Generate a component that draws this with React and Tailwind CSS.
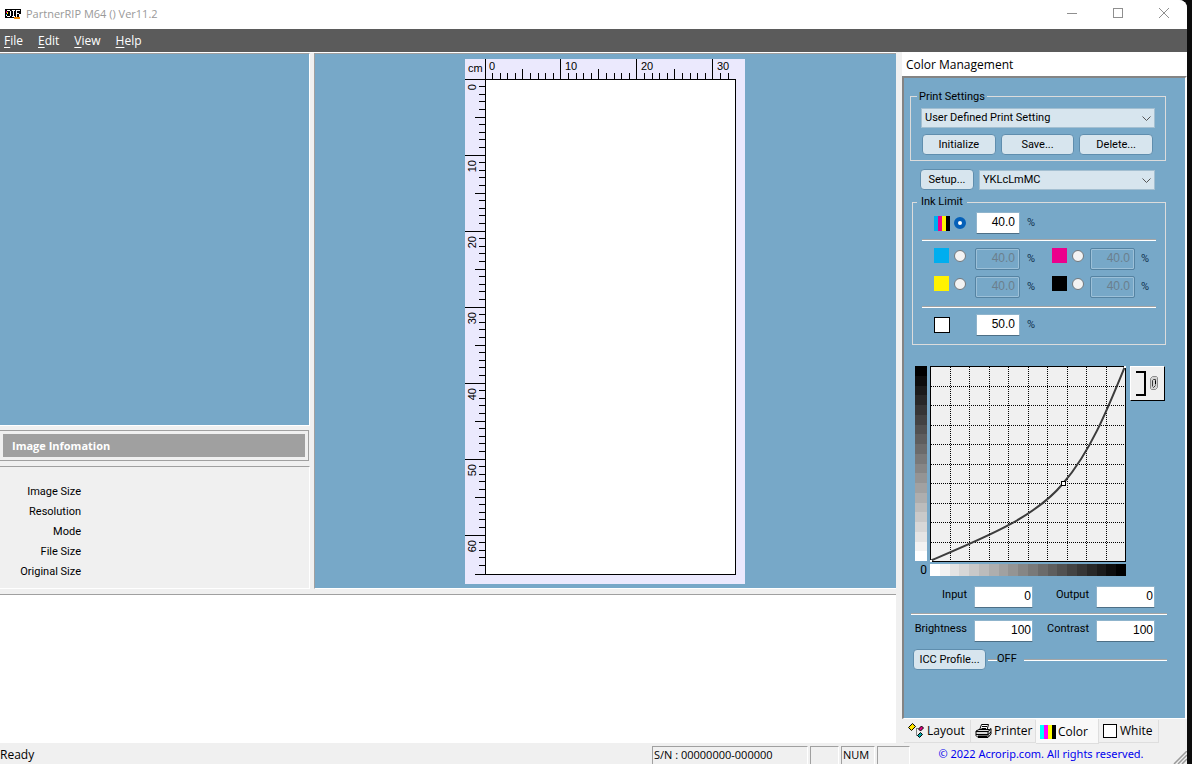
import { useState } from 'react';
import clsx from 'clsx';

const MENUS = ['File', 'Edit', 'View', 'Help'];
const INFO_ROWS = ['Image Size', 'Resolution', 'Mode', 'File Size', 'Original Size'];
const STEPS = Array.from({ length: 20 }, (_, i) => i);

const Logo = () => (
  <svg width="17" height="12" viewBox="0 0 17 12" shapeRendering="crispEdges" aria-hidden="true">
    <path d="M0 0H16V5H14V9H0Z" fill="#000" />
    <rect x="9" y="8" width="6" height="2" fill="#f08a00" />
    <path d="M2 1.5H5M5.5 2V7M2 7.5H5M1.5 6V7" fill="none" stroke="#fff" />
    <rect x="1" y="2" width="1" height="2" fill="#e6007e" />
    <rect x="2" y="3" width="1" height="2" fill="#fff200" />
    <rect x="1" y="5" width="1" height="1" fill="#00aeef" />
    <path d="M7 1.5H10M8.5 2V7M7 7.5H10M11.5 8V1M12 1.5H15M12 4.5H14" fill="none" stroke="#fff" />
  </svg>
);

const TitleBar = () => (
  <header className="h-[29px] shrink-0 flex items-center justify-between bg-white pl-[5px] text-[#999999]">
    <div className="flex items-center gap-1">
      <Logo />
      <h1 className="text-[11px]">PartnerRIP M64 () Ver11.2</h1>
    </div>
    <div className="flex items-center h-full pb-[2px]">
      <button aria-label="Minimize" className="w-[46px] h-full flex items-center justify-center">
        <svg width="11" height="11"><path d="M0 5.5H10" stroke="#8f8f8f" fill="none" /></svg>
      </button>
      <button aria-label="Maximize" className="w-[46px] h-full flex items-center justify-center">
        <svg width="11" height="11"><rect x=".5" y=".5" width="9" height="9" stroke="#8f8f8f" fill="none" /></svg>
      </button>
      <button aria-label="Close" className="w-[46px] h-full flex items-center justify-center">
        <svg width="11" height="11"><path d="M0 0L10 10M10 0L0 10" stroke="#8f8f8f" fill="none" /></svg>
      </button>
    </div>
  </header>
);

const MenuBar = () => (
  <nav className="h-[23px] shrink-0 flex items-center bg-[#5b5b5b] text-white text-[12px] pl-1 gap-[15px]">
    {MENUS.map((m) => (
      <button key={m}>
        <span className="underline underline-offset-2">{m[0]}</span>
        {m.slice(1)}
      </button>
    ))}
  </nav>
);

// Tick start for 1 cm, 5 cm and 10 cm marks
const tickFrom = (k) => (k % 10 === 0 ? 0 : k % 5 === 0 ? 10 : 14);

const Ruler = () => {
  const cols = Array.from({ length: 32 }, (_, i) => i + 1);
  const rows = Array.from({ length: 64 }, (_, i) => i + 1);
  return (
    <svg width="280" height="525" viewBox="0 0 280 525" shapeRendering="crispEdges" className="text-[11px]">
      <rect width="280" height="525" fill="#ebe9fd" />
      <rect x="20.5" y="20.5" width="250" height="495" fill="#fff" stroke="#000" />
      <path d="M20.5 0V20M0 20.5H20M10 515.5H20" stroke="#000" />
      {cols.map((k) => {
        const x = Math.round(19.4 + k * 7.6) + 0.5;
        return <path key={k} d={`M${x} ${tickFrom(k)}V20`} stroke="#000" />;
      })}
      {rows.map((k) => {
        const y = Math.floor(20 + k * 7.6) + 0.5;
        return <path key={k} d={`M${tickFrom(k)} ${y}H20`} stroke="#000" />;
      })}
      <text x="3" y="13">cm</text>
      {[0, 10, 20, 30].map((n) => (
        <text key={n} x={24 + n * 7.6} y="11">{n}</text>
      ))}
      {[0, 10, 20, 30, 40, 50, 60].map((n) => (
        <text key={n} textAnchor="end" transform={`translate(11 ${25 + n * 7.6}) rotate(-90)`}>{n}</text>
      ))}
    </svg>
  );
};

const LeftColumn = () => (
  <aside className="w-[310px] shrink-0 flex flex-col">
    <div className="flex-1 bg-[#77a8c8] border-t border-t-[#a0a0a0] border-r border-b border-white" />
    <div className="mt-1 border-y border-r border-[#a0a0a0] mr-px p-[3px]">
      <h2 className="bg-[#a0a0a0] text-white font-bold text-[11px] leading-[23px] pl-[9px] h-[23px]">Image Infomation</h2>
    </div>
    <div className="mt-[5px] h-[123px] border-t border-t-[#a0a0a0] border-r border-b border-white pt-[15px]">
      <ul className="w-[81px] text-right font-['Roboto'] text-[11px]">
        {INFO_ROWS.map((r) => (
          <li key={r} className="h-5 leading-[20px] whitespace-nowrap">{r}</li>
        ))}
      </ul>
    </div>
  </aside>
);

const PushButton = ({ className, children }) => (
  <button
    className={clsx(
      'h-[21px] rounded-[4px] border border-[#5f8eae] bg-[#d7e5ee] text-[11px] leading-[19px] whitespace-nowrap',
      className
    )}
  >
    {children}
  </button>
);

const Dropdown = ({ label, value, className }) => (
  <div className={clsx('relative', className)}>
    <select
      aria-label={label}
      defaultValue={value}
      className="w-full h-5 appearance-none bg-[#d7e5ee] border border-[#a3bfd1] pl-[3px] text-[11px] leading-[18px]"
    >
      <option>{value}</option>
    </select>
    <svg width="9" height="6" className="absolute right-1 top-2 pointer-events-none">
      <path d="M.5 .5L4.5 4.5L8.5 .5" fill="none" stroke="#555" />
    </svg>
  </div>
);

const Field = ({ id, label, value, disabled, className }) => (
  <input
    id={id}
    type="text"
    aria-label={label}
    defaultValue={value}
    disabled={disabled}
    className={clsx(
      "h-[22px] text-right font-['Liberation_Sans'] text-[12px] border pb-[2px]",
      disabled
        ? 'rounded-[2px] bg-transparent border-[#5583a2] text-[#6b7f8d] shadow-[inset_0_0_0_1px_#9cc0d8]'
        : 'bg-white border-[#8fb4cc] border-b-[#4d6f86]',
      className
    )}
  />
);

const Percent = () => <span className="self-center text-[#10304f]">%</span>;

const Rule = ({ className }) => (
  <hr className={clsx('border-0 h-[2px] bg-white border-t border-t-[#a5a5a5]', className)} />
);

const Radio = ({ label, checked, onChange }) => (
  <input
    type="radio"
    name="ink"
    aria-label={label}
    checked={checked}
    onChange={onChange}
    className="appearance-none block size-3 rounded-full bg-[#f3f3f3] border border-[#72787d] checked:bg-white checked:border-[4px] checked:border-[#0560b8]"
  />
);

const INKS = [
  { name: 'Cyan', swatch: 'bg-[#00aeef]' },
  { name: 'Magenta', swatch: 'bg-[#ec008c]' },
  { name: 'Yellow', swatch: 'bg-[#fff200]' },
  { name: 'Black', swatch: 'bg-black' },
];

const InkLimit = () => {
  const [ink, setInk] = useState('All');
  return (
    <fieldset className="mt-[5px] ml-px mr-px border border-[#dcdcdc] pb-2">
      <legend className="ml-1 px-1 leading-[14px]">Ink Limit</legend>
      <div className="grid grid-cols-[20px_22px_51px_1fr] items-center pl-[21px] pt-[3px]">
        <span className="flex w-4 h-[15px]">
          <i className="flex-1 bg-[#00aeef]" />
          <i className="flex-1 bg-[#ec008c]" />
          <i className="flex-1 bg-[#fff200]" />
          <i className="flex-1 bg-black" />
        </span>
        <Radio label="All inks" checked={ink === 'All'} onChange={() => setInk('All')} />
        <Field label="All inks limit" value="40.0" className="w-[44px] pr-1" />
        <Percent />
      </div>
      <Rule className="mx-[9px] mt-[5px]" />
      <div className="grid grid-cols-[20px_21px_52px_25px_20px_18px_51px_1fr] gap-y-1.5 pl-[21px] mt-[7px]">
        {INKS.map(({ name, swatch }) => (
          <div key={name} className="contents">
            <span className={clsx('size-[15px]', swatch)} />
            <span className="pt-[2px]">
              <Radio label={name} checked={ink === name} onChange={() => setInk(name)} />
            </span>
            <Field label={`${name} limit`} value="40.0" disabled={ink !== name} className="w-[45px] pr-1" />
            <Percent />
          </div>
        ))}
      </div>
      <Rule className="mx-[9px] mt-2" />
      <div className="grid grid-cols-[42px_51px_1fr] items-center pl-[21px] mt-1.5">
        <span className="size-4 bg-white border border-black" />
        <Field label="White limit" value="50.0" className="w-[44px] pr-1" />
        <Percent />
      </div>
    </fieldset>
  );
};

const gray = (i) => {
  const v = Math.round(255 * (1 - i / 19));
  return `rgb(${v},${v},${v})`;
};

const ToneCurve = () => (
  <div className="mt-[21px] pl-1 flex items-start gap-1">
    <div className="grid grid-cols-[12px_196px] gap-x-[3px] gap-y-[2px]">
      <div className="flex flex-col-reverse h-[195px]">
        {STEPS.map((i) => (
          <i key={i} className="flex-1" style={{ background: gray(i) }} />
        ))}
      </div>
      <svg width="196" height="196" viewBox="0 0 196 196">
        <rect x=".5" y=".5" width="195" height="195" fill="#f0f0f0" stroke="#000" />
        {[20, 39, 59, 78, 98, 117, 137, 156, 176].map((n) => (
          <path
            key={n}
            d={`M${n + 0.5} 1V195M1 ${n + 0.5}H195`}
            stroke="#000"
            strokeDasharray="1 1"
            shapeRendering="crispEdges"
          />
        ))}
        <path d="M1 194.5C55 171.5 105 151.5 133 117.5C160 86.5 177 44.5 194.5 1.5" fill="none" stroke="#3c3c3c" strokeWidth="2" />
        <rect x="131.5" y="115.5" width="4" height="4" fill="#fff" stroke="#000" />
        <rect x="0" y="194" width="2" height="2" fill="#fff" />
        <rect x="194" y="0" width="2" height="2" fill="#fff" />
      </svg>
      <span className="text-right leading-[12px] text-[12px]">0</span>
      <div className="flex h-3">
        {STEPS.map((i) => (
          <i key={i} className="flex-1" style={{ background: gray(i) }} />
        ))}
      </div>
    </div>
    <button
      aria-label="Link curves"
      className="size-[35px] bg-[#f0f0f0] border-t border-l border-white border-r border-b border-r-black border-b-black"
    >
      <svg width="33" height="33" viewBox="0 0 33 33">
        <path d="M5 5H14V28H5" fill="none" stroke="#000" strokeWidth="2" />
        <path d="M19.5 11.5L21.5 9.5H25.5L26.500 10.500V20.500L24.500 22.500H20.500L19.500 21.500Z" fill="#d4d4d4" stroke="#8c8c8c" />
        <path d="M21.5 19V13.5L22.5 12.5H24.5V17.500M21.500 19.500L22.500 20.500L24.500 18.500" fill="none" stroke="#3a3a3a" />
        <path d="M24.500 14V17" stroke="#000" />
      </svg>
    </button>
  </div>
);

const LabeledNumber = ({ id, label, value }) => (
  <div className="flex items-center">
    <label htmlFor={id} className="w-[63px] text-right pr-[7px] pb-[3px]">{label}</label>
    <Field id={id} value={value} className="w-[59px] pr-px" />
  </div>
);

const ColorPanel = () => (
  <section className="flex-1 bg-[#77a8c8] border-t-2 border-l-2 border-[#848484] border-r-2 border-r-white border-b border-b-white pl-[7px] pr-[18px] pt-[11px] font-['Roboto'] text-[11px]">
    <fieldset className="border border-[#dcdcdc] -ml-px mr-px pl-[10px] pr-[10px] pb-[5px]">
      <legend className="-ml-1 px-[2px] leading-[15px]">Print Settings</legend>
      <Dropdown label="Print setting" value="User Defined Print Setting" className="mt-1" />
      <div className="flex gap-[5px] mt-1.5 pl-px pr-[2px]">
        <PushButton className="flex-1">Initialize</PushButton>
        <PushButton className="flex-1">Save...</PushButton>
        <PushButton className="flex-1">Delete...</PushButton>
      </div>
    </fieldset>
    <div className="flex items-end gap-[5px] mt-2 pl-[9px] pr-[12px]">
      <PushButton className="w-[54px]">Setup...</PushButton>
      <Dropdown label="Ink channels" value="YKLcLmMC" className="flex-1" />
    </div>
    <InkLimit />
    <ToneCurve />
    <div className="flex mt-[10px]">
      <LabeledNumber id="input" label="Input" value="0" />
      <LabeledNumber id="output" label="Output" value="0" />
    </div>
    <Rule className="mt-[5px]" />
    <div className="flex mt-[5px]">
      <LabeledNumber id="brightness" label="Brightness" value="100" />
      <LabeledNumber id="contrast" label="Contrast" value="100" />
    </div>
    <div className="flex items-center mt-[7px] pl-[2px]">
      <PushButton className="w-[73px]">ICC Profile...</PushButton>
      <Rule className="w-[9px] ml-[2px]" />
      <span>OFF</span>
      <Rule className="flex-1 ml-[7px]" />
    </div>
  </section>
);

const LayoutIcon = () => (
  <svg width="17" height="16" viewBox="0 0 17 16">
    <path d="M8 5.5H10.5M8.5 6V12.5H11" fill="none" stroke="#808080" />
    <path d="M.5 4.5L4.500 .5L7.500 3.500L3.500 7.500Z" fill="#ffe600" stroke="#000" />
    <path d="M10.5 6L13.500 3L15.500 5L12.500 8Z" fill="#e0007f" stroke="#000" />
    <path d="M9.5 12.500L12.500 9.500L14.500 11.500L11.500 14.500Z" fill="#00a5a5" stroke="#000" />
  </svg>
);

const PrinterIcon = () => (
  <svg width="17" height="16" viewBox="0 0 17 16">
    <path d="M4.5 7L6.5 1.5H13.5L12 7Z" fill="#fff" stroke="#000" />
    <path d="M7 3.5H12M6.5 5.5H11" stroke="#000" />
    <path d="M1 8L4 6.5H14.5L16 5.5V11L13 14.5H3L1 12.5Z" fill="#d8d8d8" stroke="#000" />
    <path d="M1 8.5H13L15.5 6.5M1 11.5H13L16 9M13 8V14" fill="none" stroke="#000" />
    <path d="M3 13.5H12" stroke="#000" strokeWidth="2" />
  </svg>
);

const ColorIcon = () => (
  <svg width="16" height="14" viewBox="0 0 16 14" shapeRendering="crispEdges">
    <rect width="4" height="14" fill="#00ffff" />
    <rect x="4" width="4" height="14" fill="#ff00ff" />
    <rect x="8" width="4" height="14" fill="#ffff00" />
    <rect x="12" width="4" height="14" fill="#000" />
  </svg>
);

const WhiteIcon = () => (
  <svg width="15" height="14" viewBox="0 0 15 14">
    <rect x=".5" y=".5" width="13" height="13" fill="#fff" stroke="#000" />
  </svg>
);

const TABS = [
  { name: 'Layout', Icon: LayoutIcon, width: 'w-[67px]' },
  { name: 'Printer', Icon: PrinterIcon, width: 'w-[65px]' },
  { name: 'Color', Icon: ColorIcon, width: 'w-[63px]' },
  { name: 'White', Icon: WhiteIcon, width: 'w-[60px]' },
];

const PanelTabs = () => {
  const [active, setActive] = useState('Color');
  return (
    <div role="tablist" className="h-6 shrink-0 flex items-start pl-[2px] text-[12px]">
      {TABS.map(({ name, Icon, width }) => (
        <button
          key={name}
          role="tab"
          aria-selected={active === name}
          onClick={() => setActive(name)}
          className={clsx(
            'flex items-center gap-[2px] pl-1 border-r border-b border-[#dedede]',
            width,
            active === name ? 'h-[25px] pt-[2px] bg-[#f9f9f9]' : 'h-[23px] mt-px'
          )}
        >
          <Icon />
          {name}
        </button>
      ))}
    </div>
  );
};

const StatusCell = ({ className, children }) => (
  <span className={clsx('h-[18px] border-t border-l border-[#a0a0a0] border-r border-r-white pl-px leading-[16px]', className)}>
    {children}
  </span>
);

const StatusBar = () => (
  <footer className="h-[21px] shrink-0 flex items-center text-[11px]">
    <span className="flex-1 pt-[2px] text-[12px]">Ready</span>
    <div className="flex gap-[2px] pt-[3px]">
      <StatusCell className="w-[156px]">S/N : 00000000-000000</StatusCell>
      <StatusCell className="w-[29px]" />
      <StatusCell className="w-[34px]">NUM</StatusCell>
      <StatusCell className="w-[33px]" />
    </div>
    <span className="w-[262px] text-center font-['Noto_Sans'] text-[#0000ee] pt-[2px]">
      © 2022 Acrorip.com. All rights reserved.
    </span>
    <svg width="15" height="13" className="self-end">
      <path d="M2 13L15 0M6 13L15 4M10 13L15 8" stroke="#9a9a9a" fill="none" strokeWidth="1.5" />
    </svg>
  </footer>
);

export default function App() {
  return (
    <div className="min-h-screen bg-[#0c0c0c] pr-[5px] flex">
      <div className="flex-1 flex flex-col bg-[#f0f0f0] rounded-tr-lg overflow-hidden font-['Open_Sans'] text-black">
        <TitleBar />
        <MenuBar />
        <div className="flex-1 flex gap-1.5">
          <main className="flex-1 flex flex-col gap-[5px]">
            <div className="flex-1 flex gap-1 border-t border-white">
              <LeftColumn />
              <div className="flex-1 bg-[#77a8c8] border-t border-l border-[#a0a0a0] border-b border-b-white pt-[5px] pr-[2px] flex justify-center items-start font-['Liberation_Sans']">
                <Ruler />
              </div>
            </div>
            <div className="h-[149px] shrink-0 bg-white border-t border-[#a0a0a0]" />
          </main>
          <div className="w-[285px] shrink-0 flex flex-col">
            <h2 className="h-6 bg-white text-[12px] leading-[25px] pl-1">Color Management</h2>
            <ColorPanel />
            <PanelTabs />
          </div>
        </div>
        <StatusBar />
      </div>
    </div>
  );
}
